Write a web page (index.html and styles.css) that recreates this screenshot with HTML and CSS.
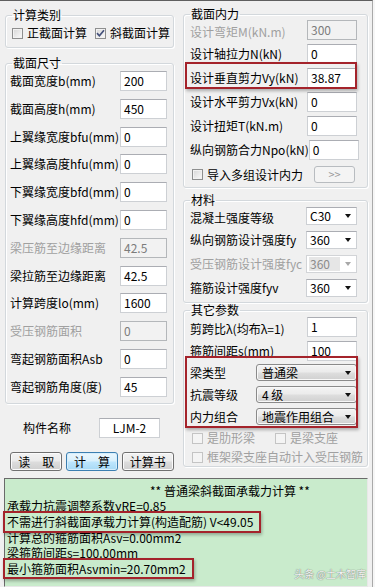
FILE: index.html
```html
<!DOCTYPE html>
<html lang="zh-CN">
<head>
<meta charset="utf-8">
<title>普通梁斜截面承载力计算</title>
<link rel="stylesheet" href="styles.css">
</head>
<body>
<div class="win">
  <div class="top">
    <div class="col col-left">
      <fieldset class="grp grp-l grp-type">
        <legend>计算类别</legend>
        <div class="cb-row">
          <span class="cb-item"><span class="cb"></span>正截面计算</span>
          <span class="cb-item"><span class="cb"><svg width="9" height="9" viewBox="0 0 9 9"><path d="M1 4.2 L3.4 6.8 L8 1.2" fill="none" stroke="#44507a" stroke-width="1.7"/></svg></span>斜截面计算</span>
        </div>
      </fieldset>
      <fieldset class="grp grp-l grp-size">
        <legend>截面尺寸</legend>
        <div class="rows rows-size">
          <div class="row"><span class="lbl">截面宽度b(mm)</span><span class="tb tb-l">200</span></div>
          <div class="row"><span class="lbl">截面高度h(mm)</span><span class="tb tb-l">450</span></div>
          <div class="row"><span class="lbl">上翼缘宽度bfu(mm)</span><span class="tb tb-l">0</span></div>
          <div class="row"><span class="lbl">上翼缘高度hfu(mm)</span><span class="tb tb-l">0</span></div>
          <div class="row"><span class="lbl">下翼缘宽度bfd(mm)</span><span class="tb tb-l">0</span></div>
          <div class="row"><span class="lbl">下翼缘高度hfd(mm)</span><span class="tb tb-l">0</span></div>
          <div class="row"><span class="lbl dis">梁压筋至边缘距离</span><span class="tb tb-l tb-dis">42.5</span></div>
          <div class="row"><span class="lbl">梁拉筋至边缘距离</span><span class="tb tb-l">42.5</span></div>
          <div class="row"><span class="lbl">计算跨度lo(mm)</span><span class="tb tb-l">1600</span></div>
          <div class="row"><span class="lbl dis">受压钢筋面积</span><span class="tb tb-l tb-dis">0</span></div>
          <div class="row"><span class="lbl">弯起钢筋面积Asb</span><span class="tb tb-l">0</span></div>
          <div class="row"><span class="lbl">弯起钢筋角度(度)</span><span class="tb tb-l">45</span></div>
        </div>
      </fieldset>
      <div class="name-row"><span class="lbl">构件名称</span><span class="tb tb-name">LJM-2</span></div>
      <div class="btn-row">
        <span class="btn btn-a">读&emsp;取</span>
        <span class="btn btn-b btn-focus">计&emsp;算</span>
        <span class="btn btn-a">计算书</span>
      </div>
    </div>
    <div class="col col-right">
      <fieldset class="grp grp-r grp-force">
        <legend>截面内力</legend>
        <div class="rows rows-force">
          <div class="row first"><span class="lbl dis">设计弯矩M(kN.m)</span><span class="tb tb-r tb-dis">300</span></div>
          <div class="row"><span class="lbl">设计轴拉力N(kN)</span><span class="tb tb-r">0</span></div>
          <div class="row mark mark-vy"><span class="lbl">设计垂直剪力Vy(kN)</span><span class="tb tb-r">38.87</span></div>
          <div class="row"><span class="lbl">设计水平剪力Vx(kN)</span><span class="tb tb-r">0</span></div>
          <div class="row"><span class="lbl">设计扭矩T(kN.m)</span><span class="tb tb-r">0</span></div>
          <div class="row"><span class="lbl">纵向钢筋合力Npo(kN)</span><span class="tb tb-r">0</span></div>
        </div>
        <div class="import-row">
          <span class="cb-item"><span class="cb"></span>导入多组设计内力</span>
          <span class="btn-more">&gt;&gt;</span>
        </div>
      </fieldset>
      <fieldset class="grp grp-r grp-mat">
        <legend>材料</legend>
        <div class="rows rows-mat">
          <div class="row row-sel first"><span class="lbl">混凝土强度等级</span><span class="sel"><span class="sel-txt">C30</span><span class="arr"></span></span></div>
          <div class="row row-sel"><span class="lbl">纵向钢筋设计强度fy</span><span class="sel"><span class="sel-txt">360</span><span class="arr"></span></span></div>
          <div class="row row-sel"><span class="lbl dis">受压钢筋设计强度fyc</span><span class="sel sel-dis"><span class="sel-txt">360</span><span class="arr"></span></span></div>
          <div class="row row-sel"><span class="lbl">箍筋设计强度fyv</span><span class="sel"><span class="sel-txt">360</span><span class="arr"></span></span></div>
        </div>
      </fieldset>
      <fieldset class="grp grp-r grp-other">
        <legend>其它参数</legend>
        <div class="rows rows-force">
          <div class="row first"><span class="lbl">剪跨比λ(均布λ=1)</span><span class="tb tb-r">1</span></div>
          <div class="row"><span class="lbl">箍筋间距s(mm)</span><span class="tb tb-r">100</span></div>
        </div>
        <div class="rows rows-combo mark mark-combo">
          <div class="row row-combo"><span class="lbl">梁类型</span><span class="combo"><span>普通梁</span><span class="arr"></span></span></div>
          <div class="row row-combo"><span class="lbl">抗震等级</span><span class="combo"><span>4 级</span><span class="arr"></span></span></div>
          <div class="row row-combo"><span class="lbl">内力组合</span><span class="combo"><span>地震作用组合</span><span class="arr"></span></span></div>
        </div>
        <div class="cb-rows">
          <div class="cb-line">
            <span class="cb-item dis"><span class="cb cb-dis"></span>是肋形梁</span>
            <span class="cb-item dis"><span class="cb cb-dis"></span>是梁支座</span>
          </div>
          <div class="cb-line">
            <span class="cb-item dis"><span class="cb cb-dis"></span>框架梁支座自动计入受压钢筋</span>
          </div>
        </div>
      </fieldset>
    </div>
  </div>
  <div class="result">
    <div class="line line-title">** 普通梁斜截面承载力计算 **</div>
    <div class="line">承载力抗震调整系数γRE=0.85</div>
    <div class="line"><span class="mark mark-text">不需进行斜截面承载力计算(构造配筋) V&lt;49.05</span></div>
    <div class="line">计算总的箍筋面积Asv=0.00mm2</div>
    <div class="line">梁箍筋间距s=100.00mm</div>
    <div class="line"><span class="mark mark-text">最小箍筋面积Asvmin=20.70mm2</span></div>
    <span class="watermark">头条 @土木智库</span>
  </div>
</div>
</body>
</html>
```

FILE: styles.css
```css
* { box-sizing: border-box; }
html, body { margin: 0; padding: 0; }
body {
  width: 375px;
  height: 587px;
  overflow: hidden;
  background: #f6f6f6;
  font-family: "Noto Sans CJK SC", "Noto Sans", sans-serif;
  font-size: 12px;
  color: #000;
}
.win {
  width: 373px;
  height: 587px;
  background: #f0f0f0;
  border-top: 1px solid #5f5f5f;
  border-right: 1px solid #a9a9a9;
  display: flex;
  flex-direction: column;
}
.top {
  display: flex;
  gap: 9px;
  padding-left: 5px;
}
.col { display: flex; flex-direction: column; }
.col-left { width: 169px; }
.col-right { width: 185px; }

.grp {
  margin: 0;
  min-width: 0;
  border: 1px solid #d3d8dc;
  border-radius: 3px;
  box-shadow: inset 1px 1px 0 #fff, 1px 1px 0 #fff;
}
.grp legend {
  padding: 0 1px;
  line-height: 12px;
  font-size: 12px;
}
.grp-l { padding: 0 6px 0 4px; }
.grp-l legend { margin-left: 2px; }
.grp-r { padding: 0 10px 0 6px; }

.grp-type { margin-top: 8px; padding-top: 5px; padding-bottom: 7px; }
.grp-size { margin-top: 9px; padding-top: 2px; padding-bottom: 6px; }
.grp-force { margin-top: 7px; padding-bottom: 4px; }
.grp-mat { margin-top: 6px; padding-top: 1px; padding-bottom: 5px; }
.grp-other { margin-top: 1px; padding-top: 1px; padding-bottom: 2px; }

.lbl { white-space: nowrap; line-height: 14px; }
.row.first .lbl { padding-top: 3px; }
.dis { color: #a0a0a0; }

.cb-row { display: flex; align-items: center; gap: 8px; height: 14px; padding-left: 2px; }
.cb-item { display: flex; align-items: center; gap: 4px; white-space: nowrap; line-height: 14px; }
.cb {
  width: 11px;
  height: 11px;
  border: 1px solid #8e8f8f;
  background: linear-gradient(135deg, #d6d6d6, #fbfbfb);
  box-shadow: inset 0 0 0 1px #f2f2f2;
  display: flex;
  align-items: center;
  justify-content: center;
  flex: none;
}
.cb-dis { border-color: #c4c4c4; background: #f4f4f4; box-shadow: none; }

.rows { display: flex; flex-direction: column; }
.rows-size { gap: 7.8px; }
.rows-force { gap: 4px; }
.rows-mat { gap: 6px; }
.rows-combo { gap: 5px; margin-top: 3px; }

.row {
  display: flex;
  align-items: center;
  justify-content: space-between;
  height: 20px;
}
.row-sel { height: 18px; }
.row-combo { height: 17px; }

.tb {
  height: 20px;
  line-height: 18px;
  padding: 0 3px;
  background: #fff;
  border: 1px solid #cdd0d4;
  border-top-color: #abadb3;
  white-space: nowrap;
  flex: none;
}
.tb-l { width: 47px; }
.tb-r { width: 50px; }
.tb-dis { background: #f2f2f2; border-color: #b4b7ba; color: #7c7c7c; }

.sel {
  width: 51px;
  height: 18px;
  background: #fff;
  border: 1px solid #cdd0d4;
  border-top-color: #abadb3;
  display: flex;
  align-items: center;
  justify-content: space-between;
  padding: 0 5px 0 2px;
  flex: none;
}
.sel-txt { line-height: 14px; padding: 0 1px; }
.sel-dis { border-color: #d2d4d7; }
.sel-dis .sel-txt { background: #e6e6e6; color: #8c8c8c; padding-right: 10px; }
.sel-dis .arr { border-top-color: #a8a8a8; }

.arr {
  width: 0;
  height: 0;
  border-left: 3.5px solid transparent;
  border-right: 3.5px solid transparent;
  border-top: 4px solid #111;
}

.combo {
  width: 101px;
  height: 17px;
  border: 1px solid #8a8a8a;
  border-radius: 3px;
  background: linear-gradient(#f3f3f3 0%, #ebebeb 48%, #dedede 52%, #d0d0d0 100%);
  box-shadow: inset 0 0 0 1px #f8f8f8;
  display: flex;
  align-items: center;
  justify-content: space-between;
  padding: 0 5px 0 5px;
  line-height: 14px;
  white-space: nowrap;
  flex: none;
}

.import-row {
  margin-top: 6px;
  height: 17px;
  display: flex;
  align-items: center;
  justify-content: space-between;
  padding-left: 2px;
}
.btn-more {
  width: 41px;
  height: 17px;
  margin-right: 2px;
  border: 1px solid #b8bcc0;
  border-radius: 3px;
  background: #f4f4f4;
  color: #9a9a9a;
  text-align: center;
  line-height: 14px;
  font-size: 11px;
}

.cb-rows { margin-top: 6px; display: flex; flex-direction: column; gap: 5px; padding-left: 2px; }
.cb-line { display: flex; align-items: center; gap: 20px; height: 14px; }

.name-row {
  margin-top: 14px;
  height: 20px;
  display: flex;
  align-items: center;
  gap: 28px;
  padding-left: 18px;
}
.tb-name { width: 61px; text-align: center; }

.btn-row {
  margin-top: 14px;
  display: flex;
  gap: 4px;
  padding-left: 5px;
}
.btn {
  height: 19px;
  border: 1px solid #707070;
  border-radius: 3px;
  background: linear-gradient(#f2f2f2 0%, #ebebeb 48%, #dddddd 52%, #cfcfcf 100%);
  box-shadow: inset 0 0 0 1px #fbfbfb;
  text-align: center;
  line-height: 17px;
  white-space: nowrap;
}
.btn-a { width: 53px; }
.btn-b { width: 52px; }
.btn-focus {
  border-color: #3c7fb1;
  background: linear-gradient(#eaf6fd 0%, #d9f0fc 48%, #bee6fd 52%, #a7d9f5 100%);
  box-shadow: inset 0 0 0 1px #d6eefc;
}

.mark { position: relative; }
.mark::after {
  content: "";
  position: absolute;
  border: 2px solid #a4232b;
  box-shadow: 1px 2px 3px rgba(0, 0, 0, 0.28);
  pointer-events: none;
}
.mark-vy::after { top: -6px; bottom: -1px; left: -5px; right: 0; }
.mark-combo::after { top: -8px; bottom: -3px; left: -5px; right: -1px; }

.result {
  margin: 7px 4px 0 4px;
  flex: 1;
  position: relative;
  background: #c9ebcc;
  border: 1px solid;
  border-color: #6a6a6a #e8e8e8 #e8e8e8 #6a6a6a;
  padding: 4px 2px 0 2px;
  line-height: 15.6px;
  white-space: nowrap;
}
.line { height: 15.6px; }
.line-title { padding-left: 143px; }
.mark-text { display: inline-block; }
.mark-text::after { top: -3px; bottom: -3px; left: -4px; right: -8px; }

.watermark {
  position: absolute;
  right: 1px;
  bottom: 6px;
  font-size: 10px;
  line-height: 12px;
  color: #f3f3f3;
  text-shadow: 0 0 1px #7a847a, 0 0 1px #7a847a;
}
```
